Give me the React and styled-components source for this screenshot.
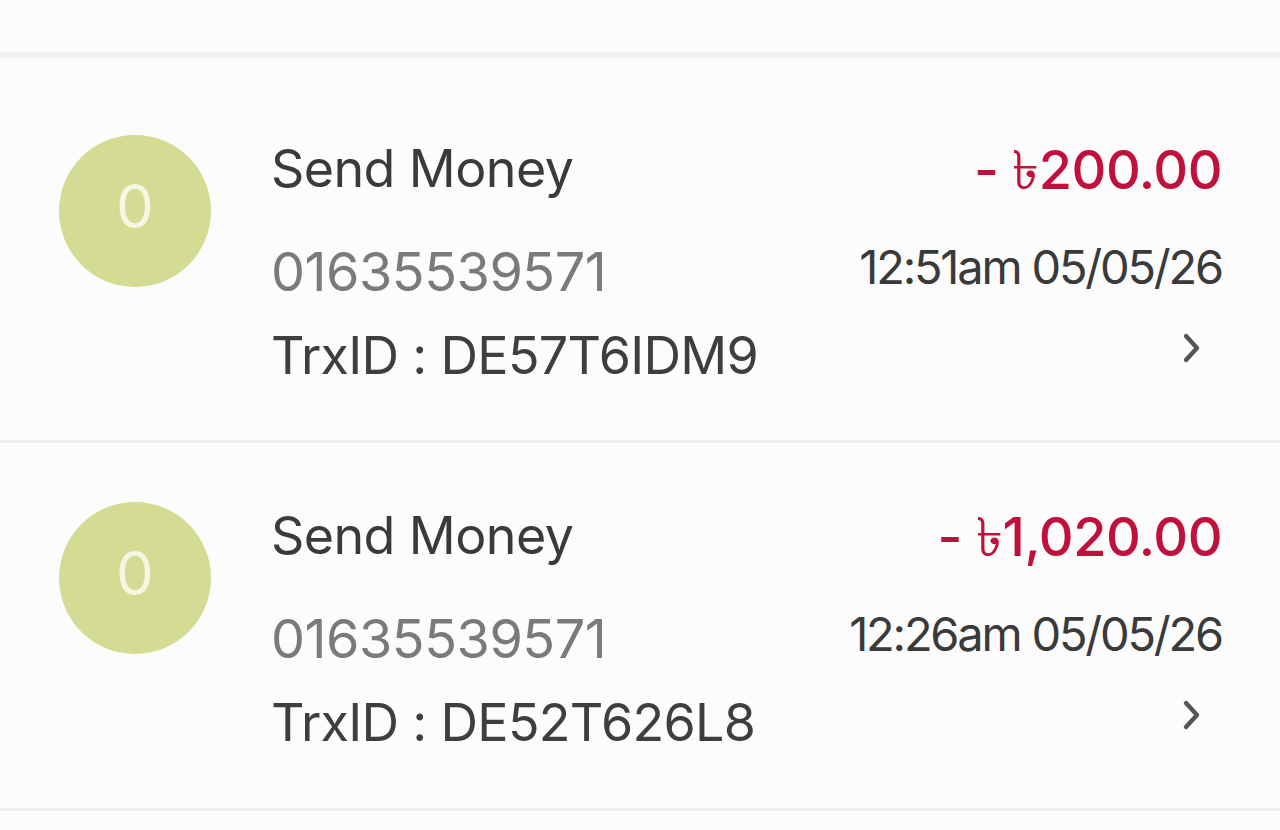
import React from "react";
import styled, { createGlobalStyle } from "styled-components";

const Global = createGlobalStyle`
  html, body { margin: 0; padding: 0; background: #fcfcfc; }
  body { font-family: Inter, "Noto Sans", sans-serif; -webkit-font-smoothing: antialiased; }
`;

const Page = styled.div`
  width: 1280px;
  min-height: 830px;
  background: #fcfcfc;
  overflow: hidden;
`;

const Header = styled.header`
  height: 52px;
  background: #fcfcfc;
  border-bottom: 6px solid #f1f1f1;
  box-sizing: content-box;
`;

const List = styled.ul`
  list-style: none;
  margin: 0;
  padding: 0;
`;

const Row = styled.li`
  display: grid;
  grid-template-columns: 152px 1fr auto;
  column-gap: 60px;
  align-items: start;
  height: 385px;
  box-sizing: border-box;
  padding: 77px 58px 0 59px;
  border-bottom: 3px solid #eeeeee;
  & + & { height: 368px; padding-top: 59px; }
`;

const Avatar = styled.div`
  width: 152px;
  height: 152px;
  border-radius: 50%;
  background: #d3dc92;
  color: #f5f7e2;
  display: flex;
  align-items: center;
  justify-content: center;
  font-size: 60px;
  font-weight: 400;
  padding-bottom: 10px;
  box-sizing: border-box;
`;

const Info = styled.div`
  display: flex;
  flex-direction: column;
  padding-top: 2px;
`;

const Title = styled.div`
  font-size: 52px;
  line-height: 64px;
  color: #3a3a3a;
  letter-spacing: -0.6px;
`;

const Phone = styled.div`
  font-size: 54px;
  line-height: 64px;
  margin-top: 39px;
  color: #7a7a7a;
  letter-spacing: -0.5px;
`;

const Trx = styled.div`
  font-size: 52px;
  line-height: 64px;
  margin-top: 20px;
  color: #3e3e3e;
  letter-spacing: -0.7px;
`;

const Meta = styled.div`
  display: flex;
  flex-direction: column;
  align-items: flex-end;
  padding-top: 3px;
`;

const Amount = styled.div`
  font-size: 54px;
  line-height: 64px;
  font-weight: 500;
  color: #c0103b;
  letter-spacing: -0.5px;
`;

const DateText = styled.div`
  font-size: 47px;
  line-height: 64px;
  margin-top: 33px;
  color: #3a3a3a;
  letter-spacing: -2.2px;
`;

const Chevron = styled.svg`
  width: 24px;
  height: 34px;
  margin-top: 32px;
  margin-right: 18px;
`;

const data = [
  { title: "Send Money", phone: "01635539571", trx: "DE57T6IDM9", amount: "- ৳200.00", date: "12:51am 05/05/26" },
  { title: "Send Money", phone: "01635539571", trx: "DE52T626L8", amount: "- ৳1,020.00", date: "12:26am 05/05/26" },
];

export default function App() {
  return (
    <Page>
      <Global />
      <Header />
      <List>
        {data.map((d, i) => (
          <Row key={i}>
            <Avatar>0</Avatar>
            <Info>
              <Title>{d.title}</Title>
              <Phone>{d.phone}</Phone>
              <Trx>TrxID : {d.trx}</Trx>
            </Info>
            <Meta>
              <Amount>{d.amount}</Amount>
              <DateText>{d.date}</DateText>
              <Chevron viewBox="0 0 24 34" fill="none">
                <path d="M6 5 L17 17 L6 29" stroke="#555" strokeWidth="4.4" strokeLinecap="round" strokeLinejoin="round" />
              </Chevron>
            </Meta>
          </Row>
        ))}
      </List>
    </Page>
  );
}
